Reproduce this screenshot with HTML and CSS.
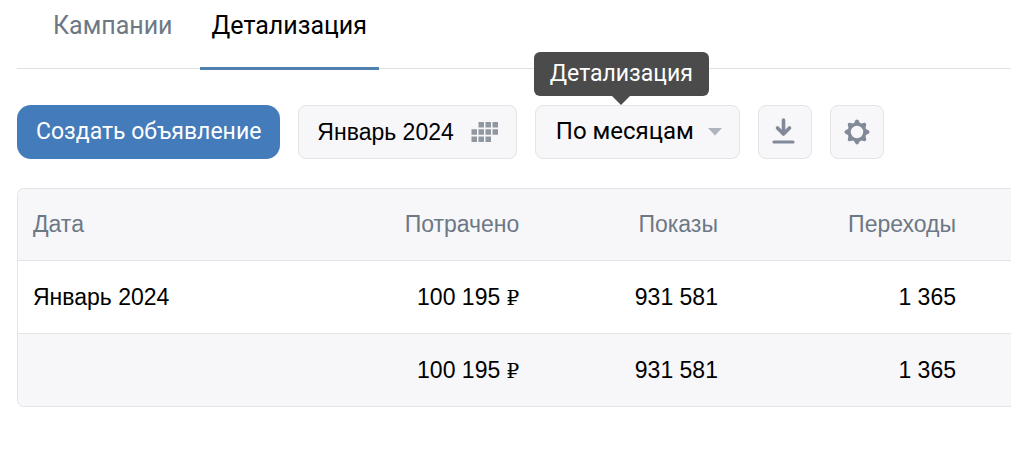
FILE: index.html
```html
<!DOCTYPE html>
<html lang="ru">

<head>
    <meta charset="UTF-8">
    <meta name="viewport" content="width=device-width, initial-scale=1.0">
    <title>Детализация</title>
    <link rel="stylesheet" href="styles.css">
</head>

<body>
    <nav class="tabs">
        <a class="tab" href="#campaigns">Кампании</a>
        <a class="tab active" href="#details">Детализация</a>
    </nav>
    <main>
        <div class="toolbar">
            <button class="btn btn-primary" type="button">Создать объявление</button>
            <button class="btn btn-date" type="button">
                <span>Январь 2024</span>
                <svg width="28" height="20" viewBox="0 0 28 20" fill="#9197a0" aria-hidden="true">
                    <path d="M7.500 0h5.500v5.500H7.500zM14.500 0h5.500v5.500h-5.500zM21.500 0h5.500v5.500h-5.500zM.5 7.200h5.500v5.500H.5zM7.500 7.200h5.500v5.500H7.500zM14.500 7.200h5.500v5.500h-5.500zM21.500 7.200h5.500v5.500h-5.500zM.5 14.500h5.500v5.500H.5zM7.500 14.500h5.500v5.500H7.500zM14.500 14.500h5.500v5.500h-5.500z" />
                </svg>
            </button>
            <div class="period">
                <select class="btn period-select" id="period" aria-labelledby="period-tip">
                    <option>По месяцам</option>
                    <option>По дням</option>
                </select>
                <svg class="period-arrow" width="14" height="8" viewBox="0 0 14 8" aria-hidden="true">
                    <path d="M0 0h14L7 7.500z" fill="#aeb4bd" />
                </svg>
                <label class="tooltip" id="period-tip" for="period">Детализация</label>
            </div>
            <button class="btn btn-icon" type="button" aria-label="Скачать">
                <svg width="26" height="30" viewBox="0 0 26 30" fill="none" stroke="#828a99" stroke-linecap="round" stroke-linejoin="round">
                    <path d="M11.500 3v14M5.500 11l6 6 6-6" stroke-width="3.600" />
                    <path d="M2 25h19" stroke-width="3.200" />
                </svg>
            </button>
            <button class="btn btn-icon" type="button" aria-label="Настройки">
                <svg width="26" height="26" viewBox="-13 -13 26 26">
                    <circle r="7.800" fill="none" stroke="#828a99" stroke-width="3.200" />
                    <g fill="#828a99">
                        <path id="tooth" d="M-3.400-8.300L-1.400-11.700Q0-13.300 1.400-11.700L3.400-8.300z" />
                        <use href="#tooth" transform="rotate(45)" />
                        <use href="#tooth" transform="rotate(90)" />
                        <use href="#tooth" transform="rotate(135)" />
                        <use href="#tooth" transform="rotate(180)" />
                        <use href="#tooth" transform="rotate(225)" />
                        <use href="#tooth" transform="rotate(270)" />
                        <use href="#tooth" transform="rotate(315)" />
                    </g>
                </svg>
            </button>
        </div>
        <table class="stats">
            <thead>
                <tr>
                    <th>Дата</th>
                    <th>Потрачено</th>
                    <th>Показы</th>
                    <th>Переходы</th>
                </tr>
            </thead>
            <tbody>
                <tr>
                    <td>Январь 2024</td>
                    <td>100 195 <span class="rub">₽</span></td>
                    <td>931 581</td>
                    <td>1 365</td>
                </tr>
            </tbody>
            <tfoot>
                <tr>
                    <td></td>
                    <td>100 195 <span class="rub">₽</span></td>
                    <td>931 581</td>
                    <td>1 365</td>
                </tr>
            </tfoot>
        </table>
    </main>
</body>

</html>
```

FILE: styles.css
```css
* {
    margin: 0;
    padding: 0;
    box-sizing: border-box;
}

body {
    padding-left: 17px;
    background: #fff;
    color: #000;
    font-family: Roboto, "Noto Sans", sans-serif;
    font-size: 23px;
    line-height: 28px;
}

.tabs {
    display: flex;
    gap: 15px;
    padding-left: 24px;
    border-bottom: 1px solid #dfe1e5;
    font-size: 25px;
}

.tab {
    margin-bottom: -2px;
    padding: 12px 12px 27px;
    border-bottom: 3px solid transparent;
    color: #6d7885;
    text-decoration: none;
}

.tab.active {
    border-color: #5181b0;
    color: #000;
}

.toolbar {
    display: flex;
    gap: 18px;
    padding: 36px 0 29px;
}

.btn {
    height: 54px;
    border: 1px solid #e3e4e8;
    border-radius: 8px;
    background: #f7f7fa;
    color: #000;
    font: inherit;
    cursor: pointer;
}

.btn-primary {
    padding: 0 19px;
    border: none;
    border-radius: 14px;
    background: #447bba;
    color: #fff;
}

.btn-date {
    display: flex;
    align-items: center;
    gap: 17px;
    padding: 0 17px 0 18px;
    font-family: "Liberation Sans", Arial, sans-serif;
}

.btn-icon {
    display: flex;
    align-items: center;
    justify-content: center;
    width: 54px;
}

.period {
    position: relative;
}

.period-select {
    appearance: none;
    padding: 0 44px 2px 20px;
    font-size: 24px;
}

.period-arrow {
    position: absolute;
    top: 23px;
    right: 18px;
    pointer-events: none;
}

.tooltip {
    position: absolute;
    bottom: 63px;
    left: -1px;
    padding: 8px 16px;
    border-radius: 6px;
    background: #4b4b4b;
    color: #fff;
    white-space: nowrap;
}

.tooltip::after {
    content: "";
    position: absolute;
    top: 100%;
    left: 50%;
    margin-left: -9px;
    border: 9px solid transparent;
    border-top-color: #4b4b4b;
    border-bottom: none;
}

.stats {
    width: 100%;
    border: 1px solid #e3e4e8;
    border-right: none;
    border-radius: 7px 0 0 7px;
    border-spacing: 0;
    overflow: hidden;
    table-layout: fixed;
    font-family: "Liberation Sans", Arial, sans-serif;
}

.stats th,
.stats td {
    height: 73px;
    padding: 0 15px 1px;
    text-align: right;
}

.stats th {
    height: 71px;
    background: #f7f7fa;
    color: #6d7885;
    font-weight: 400;
}

.stats th:first-child,
.stats td:first-child {
    text-align: left;
}

.stats th:first-child {
    width: 32%;
}

.stats th:nth-child(2),
.stats th:nth-child(3) {
    width: 20%;
}

.stats th:last-child,
.stats td:last-child {
    padding-right: 55px;
}

.stats td {
    border-top: 1px solid #e3e4e8;
}

.stats tfoot td {
    background: #f7f7fa;
}

.rub {
    font-family: "Liberation Serif", "DejaVu Serif", serif;
    font-size: 20px;
    line-height: 20px;
}
```
